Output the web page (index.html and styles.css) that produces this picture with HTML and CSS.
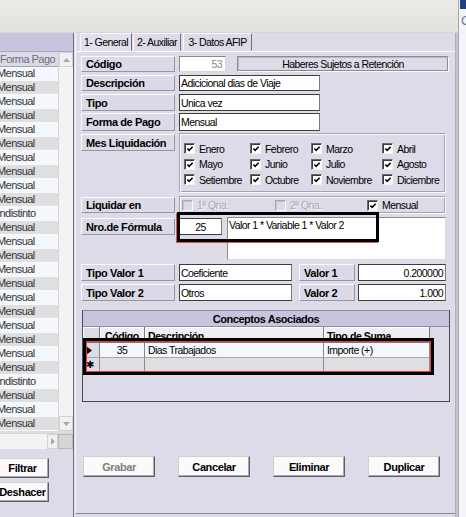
FILE: index.html
```html
<!DOCTYPE html>
<html lang="es">
<head>
<meta charset="utf-8">
<title>Conceptos</title>
<link rel="stylesheet" href="styles.css">
</head>
<body>
<div class="screen">
  <div class="app">
    <div class="topstrip"></div>
    <div class="work">
      <aside class="left">
        <div class="grouphdr"></div>
        <div class="list">
          <div class="listcol">
            <div class="colhdr">Forma Pago</div>
            <div class="lrow">Mensual</div>
            <div class="lrow">Mensual</div>
            <div class="lrow">Mensual</div>
            <div class="lrow">Mensual</div>
            <div class="lrow">Mensual</div>
            <div class="lrow">Mensual</div>
            <div class="lrow">Mensual</div>
            <div class="lrow">Mensual</div>
            <div class="lrow">Mensual</div>
            <div class="lrow">Mensual</div>
            <div class="lrow">Indistinto</div>
            <div class="lrow">Mensual</div>
            <div class="lrow">Mensual</div>
            <div class="lrow">Mensual</div>
            <div class="lrow">Mensual</div>
            <div class="lrow">Mensual</div>
            <div class="lrow">Mensual</div>
            <div class="lrow">Mensual</div>
            <div class="lrow">Mensual</div>
            <div class="lrow">Mensual</div>
            <div class="lrow">Mensual</div>
            <div class="lrow">Mensual</div>
            <div class="lrow">Indistinto</div>
            <div class="lrow">Mensual</div>
            <div class="lrow">Mensual</div>
            <div class="lrow">Mensual</div>
          </div>
          <div class="vscroll">
            <div class="sbtn"><svg width="7" height="4" viewBox="0 0 7 4"><path d="M0 4 L3.5 0 L7 4Z" fill="#a9a9a9"/></svg></div>
            <div class="strack"></div>
            <div class="sbtn"><svg width="7" height="4" viewBox="0 0 7 4"><path d="M0 0 L3.5 4 L7 0Z" fill="#a9a9a9"/></svg></div>
          </div>
        </div>
        <div class="hscroll">
          <div class="htrack"></div>
          <div class="sbtn hbtn"><svg width="4" height="7" viewBox="0 0 4 7"><path d="M0 0 L4 3.5 L0 7Z" fill="#a9a9a9"/></svg></div>
          <div class="corner"></div>
        </div>
        <div class="leftbtns">
          <button class="btn lbtn">Filtrar</button>
          <button class="btn lbtn">Deshacer</button>
        </div>
      </aside>

      <section class="main">
        <div class="tabs">
          <div class="tab t1 sel">1- General</div>
          <div class="tab t2">2- Auxiliar</div>
          <div class="tab t3">3- Datos AFIP</div>
        </div>

        <div class="page">
          <div class="frow r1">
            <div class="lbl">Código</div>
            <div class="inp num dis">53</div>
            <div class="robox">Haberes Sujetos a Retención</div>
          </div>
          <div class="frow r2">
            <div class="lbl">Descripción</div>
            <div class="inp w141">Adicicional dias de Viaje</div>
          </div>
          <div class="frow r3">
            <div class="lbl">Tipo</div>
            <div class="inp w141">Unica vez</div>
          </div>
          <div class="frow r4">
            <div class="lbl">Forma de Pago</div>
            <div class="inp w141">Mensual</div>
          </div>
          <div class="frow r5">
            <div class="lbl top">Mes Liquidación</div>
            <div class="group months">
              <label class="chk"><span class="cb on"><svg viewBox="0 0 9 9"><path d="M1.5 4 L3.5 6 L7.5 2" stroke="#000" stroke-width="1.7" fill="none"/></svg></span>Enero</label>
              <label class="chk"><span class="cb on"><svg viewBox="0 0 9 9"><path d="M1.5 4 L3.5 6 L7.5 2" stroke="#000" stroke-width="1.7" fill="none"/></svg></span>Febrero</label>
              <label class="chk"><span class="cb on"><svg viewBox="0 0 9 9"><path d="M1.5 4 L3.5 6 L7.5 2" stroke="#000" stroke-width="1.7" fill="none"/></svg></span>Marzo</label>
              <label class="chk"><span class="cb on"><svg viewBox="0 0 9 9"><path d="M1.5 4 L3.5 6 L7.5 2" stroke="#000" stroke-width="1.7" fill="none"/></svg></span>Abril</label>
              <label class="chk"><span class="cb on"><svg viewBox="0 0 9 9"><path d="M1.5 4 L3.5 6 L7.5 2" stroke="#000" stroke-width="1.7" fill="none"/></svg></span>Mayo</label>
              <label class="chk"><span class="cb on"><svg viewBox="0 0 9 9"><path d="M1.5 4 L3.5 6 L7.5 2" stroke="#000" stroke-width="1.7" fill="none"/></svg></span>Junio</label>
              <label class="chk"><span class="cb on"><svg viewBox="0 0 9 9"><path d="M1.5 4 L3.5 6 L7.5 2" stroke="#000" stroke-width="1.7" fill="none"/></svg></span>Julio</label>
              <label class="chk"><span class="cb on"><svg viewBox="0 0 9 9"><path d="M1.5 4 L3.5 6 L7.5 2" stroke="#000" stroke-width="1.7" fill="none"/></svg></span>Agosto</label>
              <label class="chk"><span class="cb on"><svg viewBox="0 0 9 9"><path d="M1.5 4 L3.5 6 L7.5 2" stroke="#000" stroke-width="1.7" fill="none"/></svg></span>Setiembre</label>
              <label class="chk"><span class="cb on"><svg viewBox="0 0 9 9"><path d="M1.5 4 L3.5 6 L7.5 2" stroke="#000" stroke-width="1.7" fill="none"/></svg></span>Octubre</label>
              <label class="chk"><span class="cb on"><svg viewBox="0 0 9 9"><path d="M1.5 4 L3.5 6 L7.5 2" stroke="#000" stroke-width="1.7" fill="none"/></svg></span>Noviembre</label>
              <label class="chk"><span class="cb on"><svg viewBox="0 0 9 9"><path d="M1.5 4 L3.5 6 L7.5 2" stroke="#000" stroke-width="1.7" fill="none"/></svg></span>Diciembre</label>
            </div>
          </div>
          <div class="frow r6">
            <div class="lbl top">Liquidar en</div>
            <div class="group liq">
              <label class="chk off"><span class="cb dis"></span>1ª Qna.</label>
              <label class="chk off"><span class="cb dis"></span>2ª Qna.</label>
              <label class="chk"><span class="cb on"><svg viewBox="0 0 9 9"><path d="M1.5 4 L3.5 6 L7.5 2" stroke="#000" stroke-width="1.7" fill="none"/></svg></span>Mensual</label>
            </div>
          </div>
          <div class="frow r7">
            <div class="lbl top">Nro.de Fórmula</div>
            <div class="inp formnum">25</div>
            <div class="inp formula">Valor 1 * Variable 1 * Valor 2</div>
            <div class="mark mark1"></div>
          </div>
          <div class="frow r8">
            <div class="lbl">Tipo Valor 1</div>
            <div class="inp w113">Coeficiente</div>
            <div class="lbl vlbl">Valor 1</div>
            <div class="inp val">0.200000</div>
          </div>
          <div class="frow r9">
            <div class="lbl">Tipo Valor 2</div>
            <div class="inp w113">Otros</div>
            <div class="lbl vlbl">Valor 2</div>
            <div class="inp val">1.000</div>
          </div>

          <div class="grid">
            <div class="gtitle">Conceptos Asociados</div>
            <div class="grow ghead">
              <div class="gc ind"></div>
              <div class="gc cod ctr">Código</div>
              <div class="gc des">Descripción</div>
              <div class="gc tip">Tipo de Suma</div>
              <div class="gc fill"></div>
            </div>
            <div class="grow g1">
              <div class="gc ind"><svg width="6" height="9" viewBox="0 0 6 9"><path d="M0 0 L6 4.5 L0 9Z" fill="#000"/></svg></div>
              <div class="gc cod ctr">35</div>
              <div class="gc des">Dias Trabajados</div>
              <div class="gc tip">Importe (+)</div>
              <div class="gc fill"></div>
            </div>
            <div class="grow g2">
              <div class="gc ind star">✱</div>
              <div class="gc cod"></div>
              <div class="gc des"></div>
              <div class="gc tip"></div>
              <div class="gc fill"></div>
            </div>
            <div class="mark mark2"></div>
          </div>

          <div class="actions">
            <button class="btn abtn disabled">Grabar</button>
            <button class="btn abtn">Cancelar</button>
            <button class="btn abtn">Eliminar</button>
            <button class="btn abtn">Duplicar</button>
          </div>
        </div>
      </section>
      <div class="frame"></div>
    </div>
  </div>
  <div class="edge"><div class="edgeblue"></div><span class="edgec">C</span></div>
</div>
</body>
</html>
```

FILE: styles.css
```css
* { box-sizing: border-box; }
html, body { margin: 0; padding: 0; }
body {
  width: 466px;
  height: 517px;
  overflow: hidden;
  font-family: "Liberation Sans", Arial, sans-serif;
  font-size: 10.5px;
  letter-spacing: -0.55px;
  color: #000;
  background: #e6e6e2;
}
button { font-family: inherit; }

.screen { display: flex; width: 466px; height: 517px; }
.app { width: 458px; display: flex; flex-direction: column; }
.topstrip { height: 33px; background: linear-gradient(#ebebe8, #e1e1dd); border-bottom: 1px solid #d6d6d2; }
.work { height: 484px; display: flex; background: #dcdbe7; }

/* ---------- left list ---------- */
.left {
  width: 74px;
  border-right: 1px solid #6f6f78;
  display: flex;
  flex-direction: column;
}
.grouphdr { height: 19px; background: #c7c5de; border-bottom: 1px solid #a9a8bb; }
.list { display: flex; height: 379px; }
.listcol { width: 58px; overflow: hidden; }
.colhdr {
  height: 15px;
  line-height: 14px;
  font-size: 11px;
  color: #6e6e80;
  background: #dbdae6;
  border-bottom: 1px solid #a4a4ae;
  white-space: nowrap;
}
.lrow {
  height: 14px;
  line-height: 13px;
  font-size: 11px;
  color: #333;
  margin-left: -3px;
  white-space: nowrap;
  background: #f4f8fc;
  border-bottom: 1px solid #fbfbfb;
}
.lrow:nth-child(odd) { background: #dfdfe1; }
.vscroll { width: 15px; display: flex; flex-direction: column; background: #f3f3f3; border-left: 1px solid #d6d6d6; }
.strack { flex: 1; }
.sbtn {
  height: 15px;
  display: flex; align-items: center; justify-content: center;
  background: #f1f1f1;
  border: 1px solid #d2d2d2;
}
.hscroll { margin-top: 2px; height: 16px; display: flex; background: #f3f3f3; border-top: 1px solid #d6d6d6; }
.htrack { flex: 1; }
.hbtn { width: 11px; height: 15px; }
.corner { width: 15px; background: #d6d6d6; border: 1px solid #b8b8b8; }
.leftbtns { display: flex; flex-direction: column; gap: 4px; margin-top: 9px; margin-left: -4px; }
.lbtn { width: 53px; height: 20px; }

/* ---------- main panel ---------- */
.main {
  width: 380px;
  margin-left: 1px;
  height: 481px;
  border-left: 1px solid #f6f6fb;
  border-bottom: 1px solid #8a8a94;
  display: flex;
  flex-direction: column;
}
.frame { width: 3px; background: #c4c4cc; border-left: 1px solid #b0b0b8; }

.tabs {
  height: 19px;
  display: flex;
  align-items: flex-end;
  padding-left: 4px;
  border-bottom: 1px solid #fbfbff;
}
.tab {
  height: 18px;
  line-height: 16px;
  text-align: center;
  border: 1px solid;
  border-color: #fbfbff #6f6f78 transparent #fbfbff;
  white-space: nowrap;
}
.tab.sel { background: #e1e0ec; }
.t1 { width: 52px; }
.t2 { width: 48px; margin-left: 1px; }
.t3 { width: 69px; margin-left: 2px; }

.page { padding: 0 9px 0 5px; display: flex; flex-direction: column; }
.frow { display: flex; gap: 4px; position: relative; }
.r1 { margin-top: 4px; height: 16px; }
.r2 { margin-top: 3px; height: 16px; }
.r3 { margin-top: 3px; height: 17px; }
.r4 { margin-top: 2px; height: 18px; }
.r5 { margin-top: 2px; height: 60px; }
.r6 { margin-top: 3px; height: 18px; }
.r7 { margin-top: 3px; height: 43px; }
.r8 { margin-top: 4px; height: 17px; }
.r9 { margin-top: 3px; height: 17px; }

.lbl {
  width: 94px;
  flex: none;
  height: 100%;
  background: #dbdae6;
  border: 1px solid;
  border-color: #fbfbff #9797a4 #9797a4 #fbfbff;
  font-weight: bold;
  font-size: 11px;
  letter-spacing: -0.4px;
  padding-left: 4px;
  display: flex;
  align-items: center;
  white-space: nowrap;
}
.lbl.top { height: 17px; margin-top: 1px; }
.r6 .lbl.top { height: 16px; }

.inp {
  background: #fff;
  border: 1px solid;
  border-color: #3c3c3c #7a7a7a #3c3c3c #3c3c3c;
  padding: 0 2px 0 1px;
  height: 100%;
  display: flex;
  align-items: center;
  white-space: nowrap;
  overflow: hidden;
}
.num { width: 47px; justify-content: flex-end; padding-right: 3px; }
.dis { color: #8a8a8a; border-color: #8a8a8a #d8d8d8 #d8d8d8 #8a8a8a; }
.robox {
  margin-left: 7px;
  margin-right: -3px;
  flex: 1;
  display: flex; align-items: center; justify-content: center;
  border: 1px solid;
  border-color: #8a8a92 #fbfbff #fbfbff #8a8a92;
  box-shadow: inset 1px 1px 0 #b8b8c2, inset -1px -1px 0 #8a8a92;
  white-space: nowrap;
}
.w141 { width: 141px; }
.w113 { width: 113px; }

.group {
  flex: 1;
  border: 1px solid;
  border-color: #a4a4b0 #fbfbff #fbfbff #a4a4b0;
  box-shadow: inset 1px 1px 0 #fbfbff, inset -1px -1px 0 #a4a4b0;
}
.months {
  display: grid;
  grid-template-columns: 66px 61px 71px auto;
  grid-auto-rows: 15.5px;
  padding: 7px 0 0 4px;
}
.liq {
  display: grid;
  grid-template-columns: 93px 92px auto;
  align-items: center;
  padding-left: 2px;
}
.chk { display: flex; align-items: center; gap: 4px; white-space: nowrap; }
.cb {
  width: 11px; height: 11px; flex: none;
  background: #fff;
  border: 1px solid;
  border-color: #6a6a6a #f4f4f4 #f4f4f4 #6a6a6a;
  box-shadow: inset 1px 1px 0 #3a3a3a;
  display: flex; align-items: center; justify-content: center;
}
.cb svg { width: 8px; height: 8px; margin: 1px 0 0 1px; }
.cb.dis { background: #dcdbe7; border-color: #a8a8b4 #fbfbff #fbfbff #a8a8b4; box-shadow: inset 1px 1px 0 #c4c4cc; }
.chk.off { color: #a6a6b4; text-shadow: 1px 1px 0 #fbfbff; }

.formnum { width: 43px; height: 17px; margin-top: 1px; justify-content: center; padding: 0; }
.formula { flex: 1; margin-left: 1px; align-items: flex-start; padding-top: 1px; border-color: #8a8a8a #d8d8e0 #d8d8e0 #8a8a8a; }
.vlbl { width: 56px; margin-left: 3px; }
.val { flex: 1; justify-content: flex-end; padding-right: 2px; }
.r8 .val, .r9 .val { margin-left: -1px; }

.mark {
  position: absolute;
  border: 3px solid #000;
  pointer-events: none;
}
.mark1 { left: 96px; top: -5px; width: 202px; height: 30px; box-shadow: -1px 1px 0 #e25050; }

/* ---------- grid ---------- */
.grid {
  position: relative;
  margin: 9px -4px 0 1px;
  height: 92px;
  border: 1px solid #4a4a52;
  border-top-color: #8a8a94;
  background: #dcdbe7;
}
.gtitle {
  height: 16px;
  background: #c7c4dd;
  border-bottom: 1px solid #8e8ea0;
  font-weight: bold;
  font-size: 11px;
  letter-spacing: -0.45px;
  display: flex; align-items: center; justify-content: center;
}
.grow { display: flex; }
.ghead { height: 16px; }
.g1 { height: 15px; background: #f4f8fc; }
.g2 { height: 14px; background: #dfdfe1; }
.gc {
  border-right: 1px solid #8a8a8a;
  border-bottom: 1px solid #a8a8a8;
  display: flex; align-items: center;
  padding-left: 3px;
  white-space: nowrap;
  overflow: hidden;
}
.ghead .gc { background: #eeeef3; border-color: #7a7a7a; box-shadow: inset 1px 1px 0 #fff; font-weight: bold; font-size: 10.5px; letter-spacing: -0.4px; align-items: flex-end; }
.ind { width: 17px; background: #dcdbe7 !important; padding-left: 3px; }
.star { font-size: 10px; line-height: 1; font-family: "DejaVu Sans", sans-serif; }
.cod { width: 45px; }
.ctr { justify-content: center; padding-left: 0; }
.des { width: 179px; }
.tip { width: 106px; }
.fill { flex: 1; background: #dcdbe7 !important; border: 0 !important; box-shadow: none !important; }
.mark2 { left: 0px; top: 27px; width: 351px; height: 37px; box-shadow: inset 0 0 0 1px #e03c3c; }

/* ---------- buttons ---------- */
.btn {
  background: #fafafa;
  border: 1px solid;
  border-color: #d0d0d0 #5e5e66 #5e5e66 #d0d0d0;
  box-shadow: inset -1px -1px 0 #a8a8b0;
  font-weight: bold;
  font-size: 11px;
  letter-spacing: -0.4px;
  color: #000;
  padding: 0;
}
.btn.disabled { color: #808080; }
.actions { display: flex; gap: 23px; margin-top: 54px; padding-left: 2px; }
.abtn { width: 72px; height: 21px; }

/* ---------- right edge ---------- */
.edge {
  width: 8px;
  background: #f3f5fa;
  border-left: 1px solid #a6a6ae;
  position: relative;
  overflow: hidden;
}
.edgeblue { height: 9px; margin-left: 1px; background: #23407e; }
.edgec { position: absolute; left: 2px; top: 13px; font-size: 13px; color: #6878ae; font-family: "Liberation Sans", sans-serif; }
```
